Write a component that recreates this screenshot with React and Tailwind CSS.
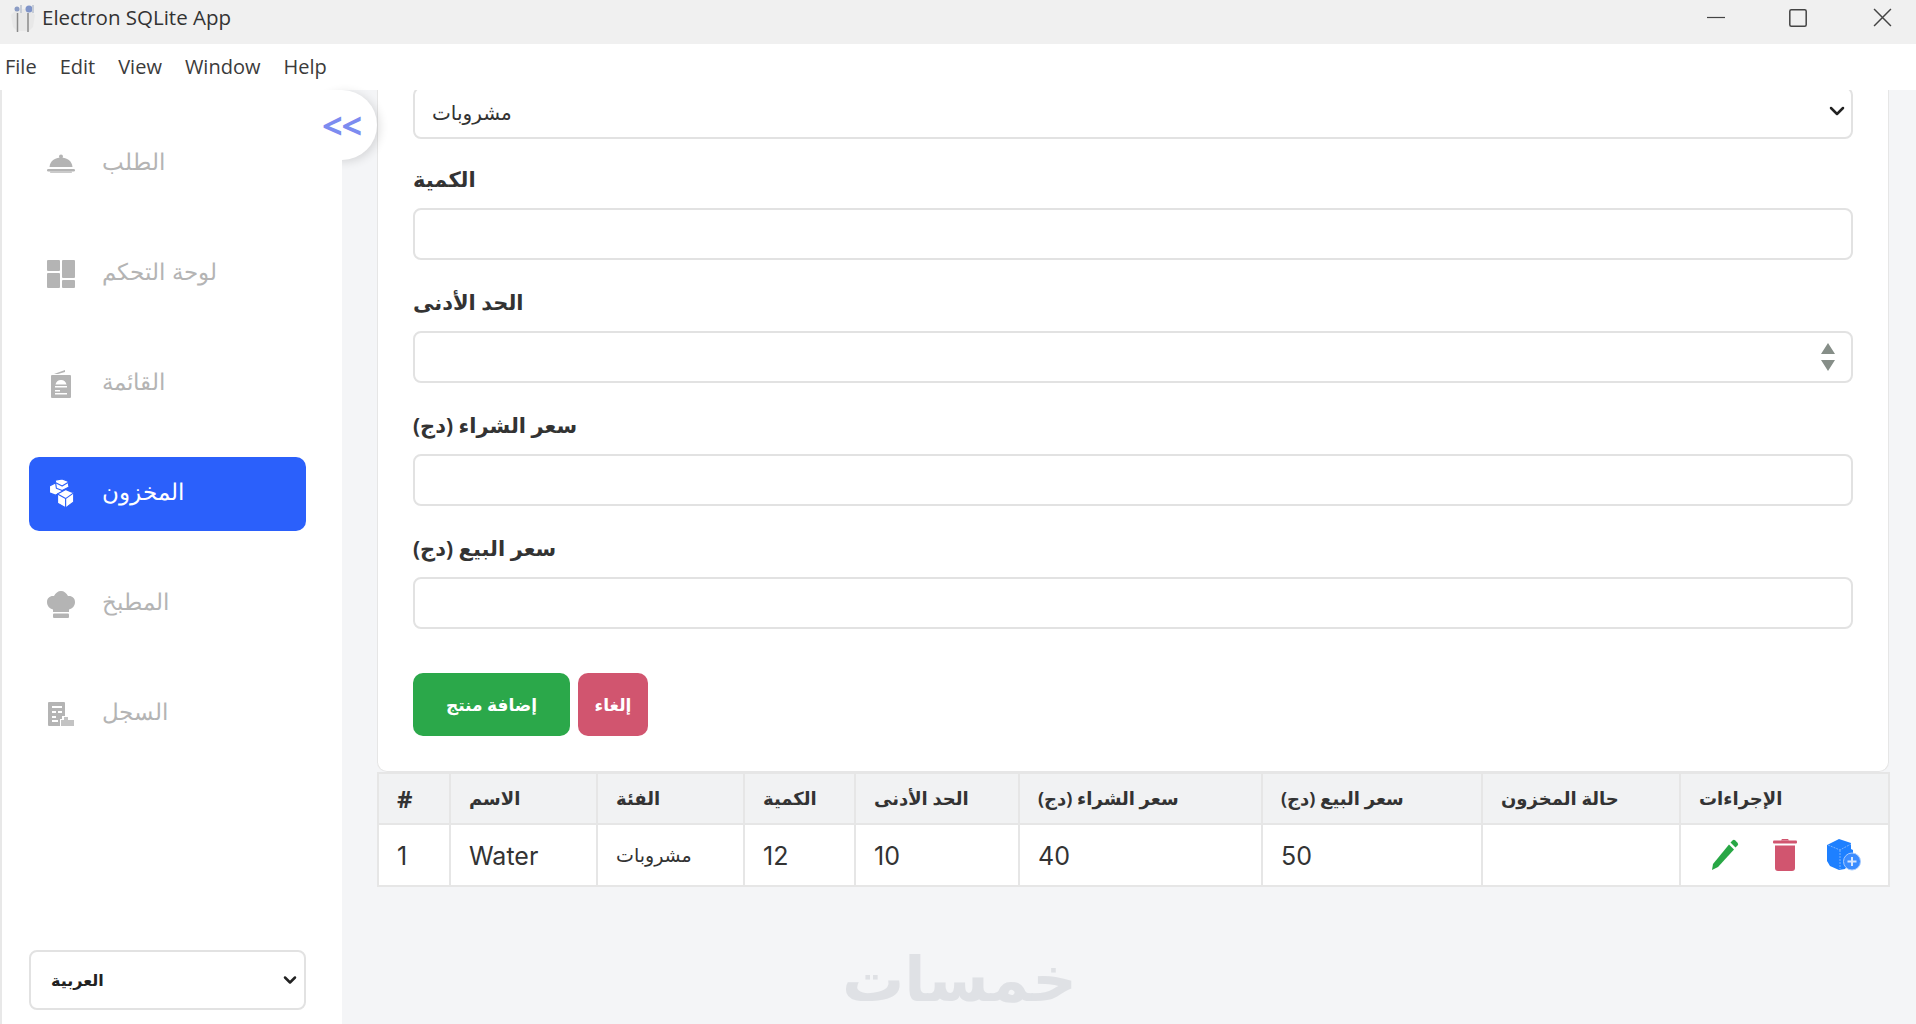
import { ChevronDown } from "lucide-react";

const sans = "font-['Noto_Sans','DejaVu_Sans',sans-serif]";

function Cloche() {
  return (
    <svg viewBox="0 0 28 20" className="w-[28px] h-[20px]" fill="currentColor">
      <circle cx="14" cy="2.5" r="2" />
      <path d="M2.5 13C3 7 8 3.5 14 3.5S25 7 25.500 13z" />
      <rect x="0" y="15" width="28" height="2.500" rx="1.200" />
      <rect x="3" y="17.500" width="22" height="1.500" rx=".7" opacity=".7" />
    </svg>
  );
}

function DashIcon() {
  return (
    <svg viewBox="0 0 28 28" className="w-[28px] h-[28px]" fill="currentColor">
      <rect x="0" y="0" width="13" height="11" rx="1" />
      <rect x="0" y="13" width="13" height="15" rx="1" />
      <rect x="15" y="0" width="13" height="18" rx="1" />
      <rect x="15" y="20" width="13" height="8" rx="1" />
    </svg>
  );
}

function MenuIcon() {
  return (
    <svg viewBox="0 0 20 28" className="w-[20px] h-[28px]" fill="currentColor">
      <path d="M3 4 14 0v2L7 4z" />
      <path fillRule="evenodd" d="M1 5h18a1 1 0 0 1 1 1v21a1 1 0 0 1-1 1H1a1 1 0 0 1-1-1V6a1 1 0 0 1 1-1zm9 5c-3 0-5 2-5.500 4.500h11C15 12 13 10 10 10zM4 16v1.500h12V16zM4 20v1.500h5V20zm0 3v1.500h12V23z" />
    </svg>
  );
}

function BoxesIcon() {
  return (
    <svg viewBox="0 0 24 26" className="w-[28px] h-[30px]" fill="currentColor" stroke="#2b60fb" strokeWidth="1" strokeLinejoin="round">
      <path d="M2 6l6-3 5 2v6l-6 3-5-2z" />
      <path d="M7 1l6-1 5 2 1 5-6 3-5-2z" />
      <path d="M9 13l7-4 7 3v8l-7 5-7-4z" />
      <path d="M9 13l7 4 7-5M16 17v8" />
      <path d="M7 3l6 3 5-3" />
    </svg>
  );
}

function ChefIcon() {
  return (
    <svg viewBox="0 0 28 27" className="w-[28px] h-[27px]" fill="currentColor">
      <path d="M6 18.500C2.500 17.500 0 15 0 11 0 7 3 4.500 7 5 8.500 2 11 0 14 0s5.500 2 7 5c4-.5 7 2 7 6 0 4-2.500 6.500-6 7.500V21H6z" />
      <rect x="6" y="22.500" width="16" height="4.500" rx="1" />
    </svg>
  );
}

function LogIcon() {
  return (
    <svg viewBox="0 0 26 24" className="w-[26px] h-[24px]" fill="currentColor">
      <path fillRule="evenodd" d="M1 0h15a1 1 0 0 1 1 1v13h-3v3h-2v7H1a1 1 0 0 1-1-1V1a1 1 0 0 1 1-1zm3 4v2h10V4zm0 5v2h4V9zm6 0v2h4V9zm-6 5v2h4v-2zm0 4v2h6v-2z" />
      <path d="M16 15h4v3h6v6H13v-6h3z" opacity=".8" />
    </svg>
  );
}

function Pencil() {
  return (
    <svg viewBox="0 0 28 32" className="w-[28px] h-[32px]" fill="#28a745">
      <path d="M21.500 1.500a2 2 0 0 1 2.800 0l2.200 2.200a2 2 0 0 1 0 2.800L24.500 8.500l-5-5z" />
      <path d="M18 5.500l5 5L7 28l-6 3 1-6z" />
    </svg>
  );
}

function Trash() {
  return (
    <svg viewBox="0 0 24 32" className="w-[24px] h-[32px]" fill="#d1556f">
      <path d="M8 1.500 9 0h6l1 1.500z" />
      <rect x="0" y="1.500" width="24" height="3" rx="1" />
      <path d="M2 6.500h20V29a3 3 0 0 1-3 3H5a3 3 0 0 1-3-3z" />
    </svg>
  );
}

function CubePlus() {
  return (
    <svg viewBox="0 0 34 32" className="w-[34px] h-[32px]">
      <path fill="#1e80ff" d="M12 0 24 4v6l2 1v8l-8 11-6 1-9-4-3-5V6z" />
      <path fill="none" stroke="#7db3fb" strokeWidth="1" strokeDasharray="2 1" d="M1 6l12 5 11-6M13 11v19" />
      <circle cx="25" cy="22.500" r="8.500" fill="#3b8cff" stroke="#a9cbfc" strokeWidth="1" />
      <path stroke="#d7e6fd" strokeWidth="2" d="M25 18v9M20.500 22.500h9" />
    </svg>
  );
}

function AppLogo() {
  return (
    <svg viewBox="0 0 28 30" className="w-[28px] h-[30px]">
      <path fill="#e8e8e8" d="M2 12 8 6h12l6 6-2 12-4 4H8l-4-4z" />
      <path stroke="#8a8a8a" strokeWidth="1.500" d="M8.500 10v19M19 10v19" />
      <circle cx="8" cy="6" r="2.500" fill="#8b9cc4" />
      <circle cx="20" cy="6" r="3.500" fill="#7f94c9" />
      <path stroke="#c6ccd6" strokeWidth="2" d="M12 2v8M24 2v8" />
    </svg>
  );
}

function WindowButtons() {
  return (
    <div className="flex items-center text-[#444]">
      <svg viewBox="0 0 18 18" className="w-[18px] h-[18px] mr-[64px]" stroke="currentColor" strokeWidth="1.200">
        <path d="M0 8.500h18" />
      </svg>
      <svg viewBox="0 0 18 18" className="w-[18px] h-[18px] mr-[66px]" fill="none" stroke="currentColor" strokeWidth="1.500">
        <rect x=".8" y=".8" width="16.400" height="16.400" rx="1.500" />
      </svg>
      <svg viewBox="0 0 18 18" className="w-[19px] h-[19px]" stroke="currentColor" strokeWidth="1.400">
        <path d="M1 1l16 16M17 1 1 17" />
      </svg>
    </div>
  );
}

const navItems = [
  { label: "الطلب", icon: <Cloche /> },
  { label: "لوحة التحكم", icon: <DashIcon /> },
  { label: "القائمة", icon: <MenuIcon /> },
  { label: "المخزون", icon: <BoxesIcon />, active: true },
  { label: "المطبخ", icon: <ChefIcon /> },
  { label: "السجل", icon: <LogIcon /> },
];

const fields = [
  { label: "الكمية" },
  { label: "الحد الأدنى", spinner: true },
  { label: "سعر الشراء (دج)" },
  { label: "سعر البيع (دج)" },
];

const columns = [
  { title: "#", width: "w-[72px]" },
  { title: "الاسم", width: "w-[147px]" },
  { title: "الفئة", width: "w-[147px]" },
  { title: "الكمية", width: "w-[111px]" },
  { title: "الحد الأدنى", width: "w-[164px]" },
  { title: "سعر الشراء (دج)", width: "w-[243px]" },
  { title: "سعر البيع (دج)", width: "w-[220px]" },
  { title: "حالة المخزون", width: "w-[198px]" },
  { title: "الإجراءات", width: "w-[209px]" },
];

const row = ["1", "Water", "مشروبات", "12", "10", "40", "50", ""];

export default function App() {
  return (
    <div className={`h-screen flex flex-col overflow-hidden bg-white text-[#212529] ${sans}`}>
      {/* title bar */}
      <div className="h-[44px] shrink-0 bg-[#f0f0f0] flex items-center justify-between pl-[9px] pr-[24px] pb-[9px]">
        <div className="flex items-center gap-[5px]">
          <AppLogo />
          <span className="text-[20.5px] text-[#333] font-['Open_Sans',sans-serif]">Electron SQLite App</span>
        </div>
        <WindowButtons />
      </div>

      {/* menu */}
      <div className="h-[46px] shrink-0 flex items-center gap-[23px] pl-[5px] text-[20px] text-[#3b3b3b] font-['Open_Sans',sans-serif]">
        <span>File</span>
        <span>Edit</span>
        <span>View</span>
        <span>Window</span>
        <span>Help</span>
      </div>

      <div className="flex-1 flex min-h-0 relative">
        {/* sidebar */}
        <aside className="relative z-10 w-[342px] shrink-0 bg-white border-l-2 border-[#e8e8e8] flex flex-col justify-between pl-[27px] pr-[36px] pt-[37px] pb-[14px]">
          <nav className="flex flex-col gap-[36px]">
            {navItems.map((item) => (
              <div
                key={item.label}
                className={`h-[74px] rounded-[10px] flex items-center pl-[15px] ${item.active ? "bg-[#2b60fb] text-white" : "text-[#b4b4b4]"}`}
              >
                <div className="w-[38px] ml-[-5px] pl-[5px] flex justify-center">{item.icon}</div>
                <span className="ml-[25px] pb-[3px] text-[23px] font-['DejaVu_Sans',sans-serif] font-light">{item.label}</span>
              </div>
            ))}
          </nav>
          <div className="relative">
            <select className="appearance-none h-[60px] w-full bg-white border-2 border-[#e2e2e2] rounded-[8px] px-[20px] text-[16px] font-bold text-[#222]">
              <option>العربية</option>
            </select>
            <ChevronDown size={20} strokeWidth={3} className="absolute right-[6px] top-[20px] text-[#222] pointer-events-none" />
          </div>
        </aside>

        {/* main */}
        <main className="flex-1 min-w-0 bg-[#f4f5f7] overflow-hidden pl-[35px] pr-[27px] relative">
          <div className="bg-white rounded-b-[10px] border-x border-b border-[#e6e6e6] px-[35px] pb-[35px] h-[682px] overflow-hidden">
            <div className="relative -mt-[3px] h-[52px]">
              <select className="appearance-none w-full h-[52px] bg-white border-2 border-[#e2e2e2] rounded-[8px] px-[17px] text-[20px] text-[#333]">
                <option>مشروبات</option>
              </select>
              <ChevronDown size={24} strokeWidth={2.5} className="absolute right-[4px] top-[12px] text-[#222] pointer-events-none" />
            </div>
            <div className="flex flex-col mt-[25px] gap-[27px]">
              {fields.map((f) => (
                <div key={f.label} className="flex flex-col gap-[7px]">
                  <label className="h-[37px] text-[21px] font-bold text-[#333]">{f.label}</label>
                  <div className="relative">
                    <input className="w-full h-[52px] bg-white border-2 border-[#e2e2e2] rounded-[8px] px-[17px]" readOnly />
                    {f.spinner && (
                      <svg viewBox="0 0 14 28" className="absolute right-[18px] top-[12px] w-[14px] h-[28px]" fill="#868e88">
                        <path d="M7 0l7 11H0zM0 17h14L7 28z" />
                      </svg>
                    )}
                  </div>
                </div>
              ))}
            </div>
            <div className="flex gap-[8px] mt-[44px]">
              <button className="w-[157px] h-[63px] rounded-[10px] bg-[#2ba84a] text-white text-[17px] font-bold">إضافة منتج</button>
              <button className="w-[70px] h-[63px] rounded-[10px] bg-[#d1556f] text-white text-[17px] font-bold">إلغاء</button>
            </div>
          </div>

          {/* products table */}
          <table className="w-[1511px] table-fixed border-collapse">
            <thead>
              <tr className="h-[51px] bg-[#f1f2f3]">
                {columns.map((c) => (
                  <th key={c.title} className={`${c.width} border-2 border-[#e6e6e6] px-[18px] text-left ${c.title === "#" ? "text-[24px]" : "text-[18px]"} font-bold text-[#333]`}>
                    {c.title}
                  </th>
                ))}
              </tr>
            </thead>
            <tbody>
              <tr className="h-[62px] bg-white">
                {row.map((cell, i) => (
                  <td key={i} className="border-2 border-[#e6e6e6] px-[18px] pt-[3px] text-[25px] text-[#333] font-['Inter',sans-serif]">
                    {i === 2 ? <span className="text-[19px] relative -top-[3px] font-['Noto_Sans','DejaVu_Sans',sans-serif]">{cell}</span> : cell}
                  </td>
                ))}
                <td className="border-2 border-[#e6e6e6] pl-[30px]">
                  <div className="flex items-center">
                    <Pencil />
                    <div className="w-[34px]" />
                    <Trash />
                    <div className="w-[30px]" />
                    <CubePlus />
                  </div>
                </td>
              </tr>
            </tbody>
          </table>

          {/* watermark */}
          <div className="absolute left-[500px] bottom-[7px] text-[62px] leading-[1.2] font-bold text-[#dfe1e5] font-['DejaVu_Sans',sans-serif] pointer-events-none">
            خمسات
          </div>
        </main>

        {/* collapse toggle, half hidden behind the sidebar */}
        <div className="absolute left-[307px] top-0 w-[70px] h-[70px] rounded-full bg-white shadow-[3px_2px_10px_rgba(0,0,0,0.12)] z-[5]" />
        <div className="absolute left-[322px] top-[9px] z-20 text-[#7c8cf0] text-[36px] leading-[54px] font-bold tracking-[-1px]">
          &lt;&lt;
        </div>
      </div>
    </div>
  );
}
